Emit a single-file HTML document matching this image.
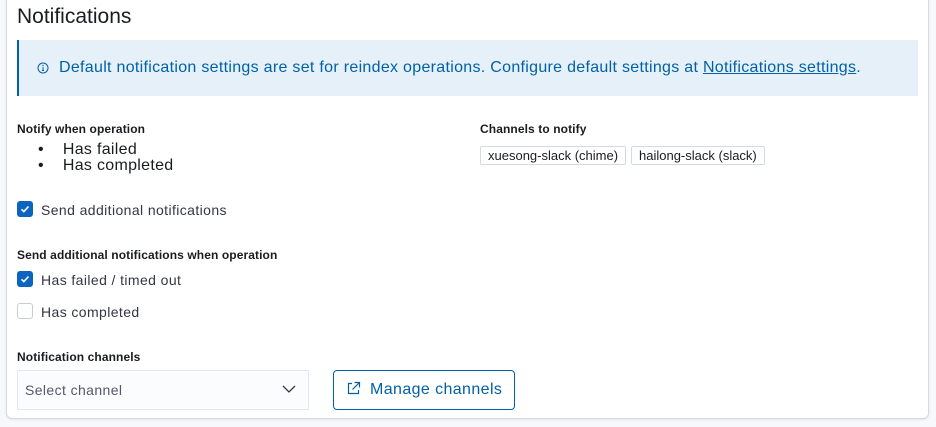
<!DOCTYPE html><html><head><style>
body{margin:0;width:936px;height:427px;background:#f7f8fc;font-family:"Liberation Sans",sans-serif;position:relative;overflow:hidden;color:#343741}
.p{position:absolute;left:6px;top:-10px;width:921px;height:427px;background:#fff;border:1px solid #d3dae6;border-radius:6px;box-shadow:0 1px 2px rgba(0,0,0,.08)}
.a{position:absolute;white-space:nowrap}
.lb{font-size:12px;font-weight:bold;color:#1a1c21;letter-spacing:0.1px}
.cb{position:absolute;width:14px;height:14px;border-radius:3px;background:#0b64c0;border:1px solid #0b64c0}
.cb.off{background:#fff;border-color:#c6ccd6}
.t{font-size:14px;color:#343741;letter-spacing:0.4px}
.bd{position:absolute;top:146px;height:17px;border:1px solid #d3dae6;border-radius:2px;font-size:13px;line-height:17px;padding:0 7px;color:#1a1c21;background:#fff}
</style></head><body>
<div class="p"></div>
<div class="a" style="left:17px;top:5px;font-size:21px;color:#1a1c21">Notifications</div>
<div class="a" style="left:17px;top:40px;width:899px;height:56px;background:#e6f0f8;border-left:2px solid #0061a6"></div>
<svg class="a" style="left:37px;top:62px" width="12" height="12" viewBox="0 0 12 12"><circle cx="6" cy="6" r="5" fill="none" stroke="#0061a6" stroke-width="1"/><path d="M6 5v3.5M5 8.5h2" stroke="#0061a6" stroke-width="1" fill="none"/><circle cx="6" cy="3.5" r=".7" fill="#0061a6"/></svg>
<div class="a" style="left:59px;top:59px;font-size:16px;color:#0061a6;letter-spacing:0.3px">Default notification settings are set for reindex operations. Configure default settings at <u>Notifications settings</u>.</div>
<div class="a lb" style="left:17px;top:122px">Notify when operation</div>
<div class="a" style="left:38px;top:142px;font-size:16px;color:#1a1c21;line-height:16px;letter-spacing:0.3px">•&nbsp;&nbsp;&nbsp;&nbsp;Has failed<br>•&nbsp;&nbsp;&nbsp;&nbsp;Has completed</div>
<div class="a lb" style="left:480px;top:122px">Channels to notify</div>
<div class="bd" style="left:480px">xuesong-slack (chime)</div>
<div class="bd" style="left:631px">hailong-slack (slack)</div>
<div class="cb" style="left:17px;top:201px"></div><svg class="a" style="left:17px;top:201px" width="16" height="16"><path d="M4.5 8.3l2.3 2.3 4.7-5" stroke="#fff" stroke-width="1.6" fill="none"/></svg>
<div class="a t" style="left:41px;top:202px">Send additional notifications</div>
<div class="a lb" style="left:17px;top:248px">Send additional notifications when operation</div>
<div class="cb" style="left:17px;top:271px"></div><svg class="a" style="left:17px;top:271px" width="16" height="16"><path d="M4.5 8.3l2.3 2.3 4.7-5" stroke="#fff" stroke-width="1.6" fill="none"/></svg>
<div class="a t" style="left:41px;top:272px">Has failed / timed out</div>
<div class="cb off" style="left:17px;top:303px"></div>
<div class="a t" style="left:41px;top:304px">Has completed</div>
<div class="a lb" style="left:17px;top:350px">Notification channels</div>
<div class="a" style="left:17px;top:370px;width:290px;height:38px;background:#fbfcfd;border:1px solid #e4e8ee"></div>
<div class="a t" style="left:25px;top:382px;color:#535966">Select channel</div>
<svg class="a" style="left:282px;top:384px" width="14" height="10"><path d="M1 2l6 6 6-6" stroke="#343741" stroke-width="1.3" fill="none"/></svg>
<div class="a" style="left:333px;top:370px;width:180px;height:38px;border:1px solid #0061a6;border-radius:4px"></div>
<svg class="a" style="left:346px;top:381px" width="15" height="15" viewBox="0 0 15 15"><path d="M6 2.5H2.5v10h10V9M8.5 1.5h5v5M13.5 1.5l-7 7" stroke="#0061a6" stroke-width="1.2" fill="none"/></svg>
<div class="a" style="left:370px;top:381px;font-size:16px;color:#0061a6;letter-spacing:0.4px">Manage channels</div>
</body></html>
